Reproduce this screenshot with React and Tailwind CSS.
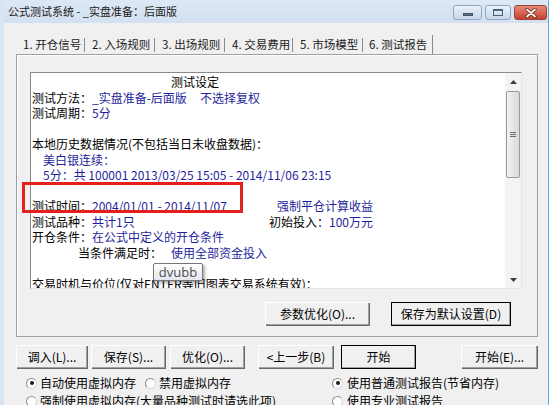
import React from 'react';

const B = 'text-[#1f1f9c]';
const btnEdge = 'shadow-[inset_1px_1px_0_#ffffff,inset_-1px_-1px_0_#696969,inset_-2px_-2px_0_#a0a0a0]';

function Btn({ className = '', def, children }) {
  return (
    <div
      className={`h-[24px] flex items-center justify-center bg-[#f0f0f0] whitespace-pre ${btnEdge} ${
        def ? 'outline outline-1 outline-black -outline-offset-1' : ''
      } ${className}`}
    >
      {children}
    </div>
  );
}

function Radio({ on }) {
  return (
    <div className="w-[11px] h-[11px] rounded-full bg-white border border-t-[#8d8d8d] border-l-[#8d8d8d] border-r-[#d8d8d8] border-b-[#d8d8d8] flex items-center justify-center">
      {on && <div className="w-[4px] h-[4px] rounded-full bg-[#1a1a1a]" />}
    </div>
  );
}

const tabs = [
  ['1. 开仓信号', 'w-[69px]'],
  ['2. 入场规则', 'w-[70px]'],
  ['3. 出场规则', 'w-[70px]'],
  ['4. 交易费用', 'w-[68px]'],
  ['5. 市场模型', 'w-[70px]'],
];

export default function App() {
  return (
    <div className="relative w-[553px] h-[405px] overflow-hidden bg-white text-[12px] text-black font-['Noto_Sans_CJK_SC','Liberation_Sans',sans-serif]">
      <div className="w-[549px] h-[405px] flex flex-col border-l-4 border-l-[#d9e5f3] border-r border-r-[#5aaee2] bg-[#f0f0f0]">
        {/* title bar */}
        <div className="h-[23px] flex items-center bg-gradient-to-b from-[#dde8f5] to-[#d3e0ef] shrink-0">
          <span className="pl-[4px] text-[11px] text-[#1b1b1b] leading-none whitespace-nowrap">公式测试系统 - _实盘准备：后面版</span>
          <div className="ml-auto mr-[1px] flex items-center gap-[3px] self-start mt-[5px]">
            <div className="w-[29px] h-[15px] rounded-[3px] border border-[#8fa6c2] bg-gradient-to-b from-[#eaf1f9] to-[#c7d6e9] flex items-end justify-center pb-[3px]">
              <div className="w-[10px] h-[3px] bg-[#5a6f8c] border border-[#44566f]" />
            </div>
            <div className="w-[26px] h-[15px] rounded-[3px] border border-[#8fa6c2] bg-gradient-to-b from-[#eaf1f9] to-[#c7d6e9] flex items-center justify-center">
              <div className="w-[10px] h-[7px] border border-[#4c5f7b] border-t-2" />
            </div>
            <div className="w-[33px] h-[15px] rounded-[3px] border border-[#9a4437] bg-gradient-to-b from-[#e58a78] to-[#c2402b] flex items-center justify-center">
              <svg width="12" height="10" viewBox="0 0 12 10">
                <path d="M2 1.5 L10 8.5 M10 1.5 L2 8.5" stroke="#5a1c13" strokeWidth="3.2" strokeLinecap="round" />
                <path d="M2 1.5 L10 8.5 M10 1.5 L2 8.5" stroke="#ffffff" strokeWidth="1.8" strokeLinecap="round" />
              </svg>
            </div>
          </div>
        </div>

        {/* body */}
        <div className="flex-1 flex flex-col pl-[12px] pr-[10px]">
          {/* tabs */}
          <div className="mt-[10px] h-[21px] flex items-end shrink-0 text-[11.5px] whitespace-nowrap">
            {tabs.map(([t, w]) => (
              <div key={t} className={`${w} h-[18px] flex items-center justify-between`}>
                <span className="pl-[7px] leading-none text-[#1b1b1b]">{t}</span>
                <div className="w-px h-[14px] bg-[#8a8a8a]" />
              </div>
            ))}
            <div className="w-[70px] h-[21px] flex items-center justify-between bg-[#f0f0f0]">
              <span className="pl-[6px] pt-[2px] leading-none text-[#1b1b1b]">6. 测试报告</span>
              <div className="w-px h-[19px] self-end bg-[#8a8a8a]" />
            </div>
          </div>

          {/* tab panel */}
          <div className="h-[283px] border border-[#a0a0a0] shadow-[inset_1px_1px_0_#ffffff] flex flex-col shrink-0">
            {/* text box */}
            <div className="ml-[13px] mt-[17px] w-[492px] h-[217px] flex border border-t-[#8a8a8a] border-l-[#8a8a8a] border-r-[#e6e6e6] border-b-[#e6e6e6] bg-white">
              <div className="flex-1 pl-[1px] pt-[1px] leading-[15.5px] whitespace-pre overflow-hidden">
                <div className="pl-[139px]">测试设定</div>
                <div className="flex">
                  <span className="w-[60px]">测试方法：</span>
                  <span className={`w-[108px] ${B}`}>_实盘准备-后面版</span>
                  <span className={B}>不选择复权</span>
                </div>
                <div className="flex">
                  <span className="w-[60px]">测试周期：</span>
                  <span className={B}>5分</span>
                </div>
                <div className="h-[15.5px]" />
                <div>本地历史数据情况(不包括当日未收盘数据)：</div>
                <div className={`pl-[11px] ${B}`}>美白银连续：</div>
                <div className={`pl-[11px] ${B}`}>5分：共 100001 2013/03/25 15:05 - 2014/11/06 23:15</div>
                <div className="h-[15.5px]" />
                <div className="flex w-[341px] justify-between">
                  <span>
                    <span className="inline-block w-[60px]">测试时间：</span>
                    <span className={B}>2004/01/01 - 2014/11/07</span>
                  </span>
                  <span className={B}>强制平仓计算收益</span>
                </div>
                <div className="flex w-[341px] justify-between">
                  <span>
                    <span className="inline-block w-[60px]">测试品种：</span>
                    <span className={B}>共计1只</span>
                  </span>
                  <span>
                    初始投入：<span className={B}>100万元</span>
                  </span>
                </div>
                <div className="flex">
                  <span className="w-[60px]">开仓条件：</span>
                  <span className={B}>在公式中定义的开仓条件</span>
                </div>
                <div className="flex pl-[46px]">
                  <span className="w-[93px]">当条件满足时：</span>
                  <span className={B}>使用全部资金投入</span>
                </div>
                <div className="h-[15.5px]" />
                <div>交易时机与价位(仅对ENTER等旧图表交易系统有效)：</div>
              </div>

              {/* scrollbar */}
              <div className="w-[16px] flex flex-col bg-[#f4f4f4]">
                <div className="h-[17px] flex items-center justify-center">
                  <svg width="7" height="4" viewBox="0 0 7 4">
                    <path d="M0 4 L3.5 0 L7 4 Z" fill="#3c3c3c" />
                  </svg>
                </div>
                <div className="mx-[1px] mt-[1px] h-[87px] rounded-[2px] border border-[#9a9a9a] bg-gradient-to-r from-[#f3f3f3] to-[#d9d9d9] flex items-center justify-center">
                  <div className="flex flex-col gap-[1px]">
                    <div className="w-[6px] h-px bg-[#6d6d6d]" />
                    <div className="w-[6px] h-px bg-[#6d6d6d]" />
                    <div className="w-[6px] h-px bg-[#6d6d6d]" />
                  </div>
                </div>
                <div className="flex-1" />
                <div className="h-[17px] flex items-center justify-center">
                  <svg width="7" height="4" viewBox="0 0 7 4">
                    <path d="M0 0 L3.5 4 L7 0 Z" fill="#3c3c3c" />
                  </svg>
                </div>
              </div>
            </div>

            {/* panel buttons */}
            <div className="mt-[13px] ml-[248px] flex gap-[21px]">
              <Btn className="w-[105px]">参数优化(O)...</Btn>
              <Btn className="w-[120px]" def>保存为默认设置(D)</Btn>
            </div>
          </div>

          {/* dialog buttons */}
          <div className="mt-[8px] flex shrink-0">
            <Btn className="w-[72px]">调入(L)...</Btn>
            <Btn className="w-[75px] ml-[3px]">保存(S)...</Btn>
            <Btn className="w-[75px] ml-[4px]">优化(O)...</Btn>
            <Btn className="w-[76px] ml-[13px]">&lt;上一步(B)</Btn>
            <Btn className="w-[75px] ml-[7px]" def>开始</Btn>
            <Btn className="w-[77px] ml-[45px]">开始(E)...</Btn>
          </div>

          {/* radios */}
          <div className="mt-[8px] flex pl-[10px]">
            <div className="w-[306px] flex flex-col gap-[6px]">
              <div className="flex items-center h-[12px]">
                <Radio on />
                <span className="ml-[3px] leading-none">自动使用虚拟内存</span>
                <div className="ml-[9px]">
                  <Radio />
                </div>
                <span className="ml-[3px] leading-none">禁用虚拟内存</span>
              </div>
              <div className="flex items-center h-[12px]">
                <Radio />
                <span className="ml-[3px] leading-none">强制使用虚拟内存(大量品种测试时请选此项)</span>
              </div>
            </div>
            <div className="flex flex-col gap-[6px]">
              <div className="flex items-center h-[12px]">
                <Radio on />
                <span className="ml-[4px] leading-none">使用普通测试报告(节省内存)</span>
              </div>
              <div className="flex items-center h-[12px]">
                <Radio />
                <span className="ml-[4px] leading-none">使用专业测试报告</span>
              </div>
            </div>
          </div>
        </div>
      </div>

      {/* highlight box */}
      <div className="absolute left-[22px] top-[182px] w-[221px] h-[31px] border-[3px] border-[#e5201c]" />

      {/* tooltip */}
      <div className="absolute left-[153px] top-[263px] w-[50px] h-[18px] rounded-[2px] border border-[#767676] bg-gradient-to-b from-white to-[#e6e7ef] shadow-[2px_2px_3px_rgba(0,0,0,0.3)] flex items-center justify-center text-[13px] leading-none text-[#4c4c4c] font-['Open_Sans','Liberation_Sans',sans-serif]">
        dvubb
      </div>
    </div>
  );
}
